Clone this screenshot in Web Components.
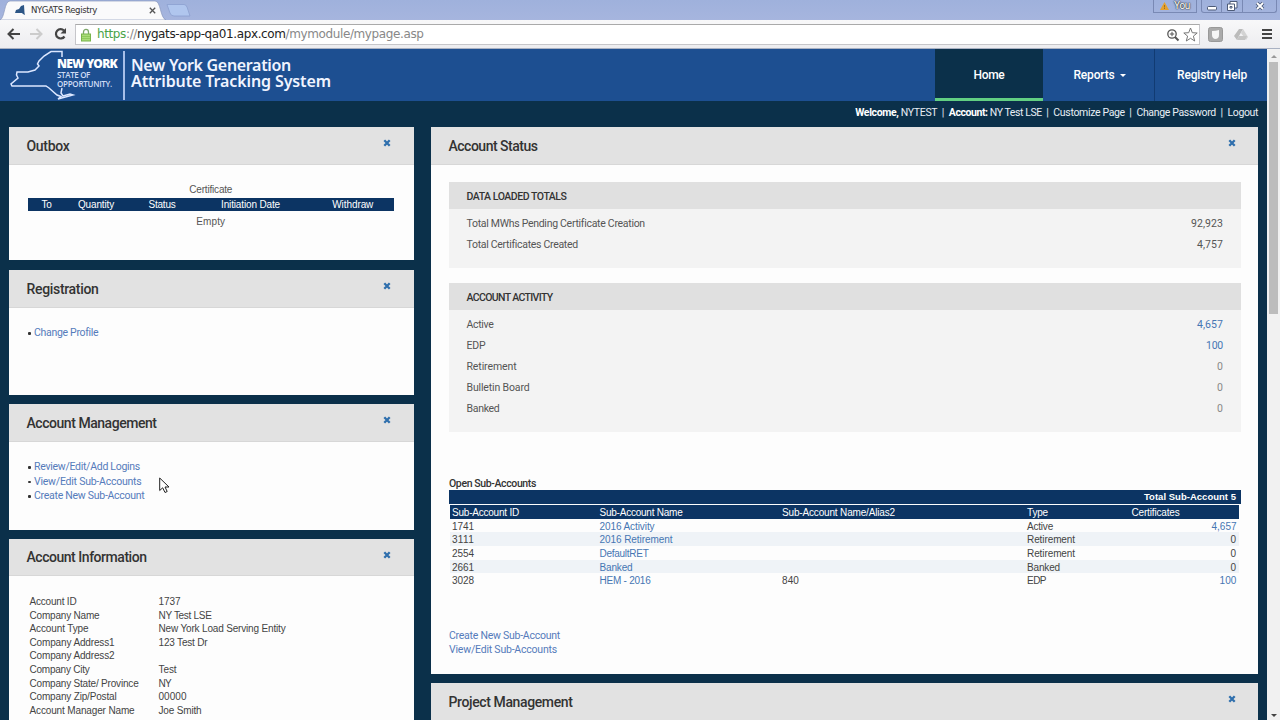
<!DOCTYPE html>
<html lang="en">
<head>
<meta charset="utf-8">
<title>NYGATS Registry</title>
<style>
  body {
    margin: 0;
    height: 720px;
    overflow: hidden;
    display: flex;
    flex-direction: column;
    font: 10.500px/14px Roboto, "Liberation Sans", sans-serif;
    color: #444;
  }
  .viewport { flex: 1; display: flex; min-height: 0; }
  .page { flex: 1; background: #0b304a; overflow: hidden; }
  .columns { display: grid; grid-template-columns: 404.5px 827px; gap: 17.5px; padding-left: 9px; align-items: start; }
  .column { display: flex; flex-direction: column; }
</style>
</head>
<body>
<browser-chrome></browser-chrome>
<div class="viewport">
  <div class="page">
    <registry-header></registry-header>
    <user-bar></user-bar>
    <div class="columns">
      <div class="column">
        <portal-panel heading="Outbox" heading-width="43" style="height:133px;margin-bottom:10px"><outbox-table></outbox-table></portal-panel>
        <portal-panel heading="Registration" heading-width="72" style="height:125px;margin-bottom:9px">
          <link-list items="Change Profile:64"></link-list>
        </portal-panel>
        <portal-panel heading="Account Management" heading-width="130" style="height:125.5px;margin-bottom:9px">
          <link-list items="Review/Edit/Add Logins:106,View/Edit Sub-Accounts:107.5,Create New Sub-Account:110.5"></link-list>
        </portal-panel>
        <portal-panel heading="Account Information" heading-width="120" style="height:220px"><account-info></account-info></portal-panel>
      </div>
      <div class="column">
        <portal-panel heading="Account Status" heading-width="89" style="height:547px;margin-bottom:9px"><account-status></account-status></portal-panel>
        <portal-panel heading="Project Management" heading-width="124" style="height:120px"></portal-panel>
      </div>
    </div>
  </div>
  <page-scrollbar></page-scrollbar>
</div>
<mouse-pointer></mouse-pointer>

<script>
class BaseElement extends HTMLElement {
  constructor() {
    super()
    this.attachShadow({ mode: "open" })
  }

  connectedCallback() {
    this.shadowRoot.innerHTML = this.template()
  }
}

class BrowserChrome extends BaseElement {
  template() {
    return `
      <style>
        :host { display: flex; flex-direction: column; height: 49px; flex: none; }
        .tabs { height: 20px; display: flex; background: linear-gradient(#9fb1dc, #a6b5de); }
        .tab { width: 166px; height: 20px; display: flex; align-items: center; position: relative; font: 9.500px/14px "DejaVu Sans Condensed", "DejaVu Sans", sans-serif; color: #333; }
        .tab > .shape { position: absolute; left: 0; top: 0; }
        .tab > :not(.shape) { z-index: 1; }
        .favicon { margin-left: 15px; }
        fit-text.name { margin-left: 6px; }
        .close { margin-left: auto; margin-right: 10px; }
        .controls { margin-left: auto; display: flex; height: 13px; margin-right: 3px; }
        .controls > div { box-sizing: border-box; border: 1px solid #7989b4; border-top: 0; display: flex; align-items: center; justify-content: center; }
        .you { width: 44px; margin-right: 4px; gap: 5px; color: #fff; text-shadow: 0 0 1px #333, 0 0 1px #333, 0 0 2px #444; font-size: 10px; }
        .controls .min { width: 21px; border-radius: 0 0 0 3px; }
        .controls .max { width: 21px; border-left: 0; }
        .controls .x { width: 34px; border-left: 0; border-radius: 0 0 3px 0; }
        .toolbar { height: 28px; display: flex; align-items: center; background: linear-gradient(#f8f8f9, #ededf0); border-bottom: 1px solid #a9b1c2; }
        .back { margin-left: 7px; }
        .forward { margin-left: 10px; }
        .reload { margin-left: 10px; }
        .omnibox { margin-left: 7px; margin-top: 1px; width: 1125px; height: 21px; box-sizing: border-box; background: #fff; border: 1px solid #c6c6ca; border-top-color: #aaa; display: flex; align-items: center; font: 12px/18px "DejaVu Sans", sans-serif; color: #888; }
        .lock { margin: 0 6px 0 5px; }
        .omnibox fit-text { margin-top: -1px; }
        .secure { color: #4aa348; }
        .host { color: #222; }
        .zoom { margin-left: auto; margin-right: 3px; }
        .star { margin-right: 1px; }
        .shield { margin-left: 8px; }
        .drive { margin-left: 11px; }
        .menu { margin-left: 14px; }
      </style>
      <div class="tabs">
        <div class="tab">
          <svg class="shape" width="166" height="20"><path d="M0 20C5 18 4 1 10 1H155C161 1 160 18 166 20Z" fill="#fafafb" stroke="#8a98bd" stroke-width=".7"/></svg>
          <svg class="favicon" width="10" height="10" viewBox="0 0 10 10"><path d="M0 8L1 5L4 4L6 1L9 0L9.500 8L10 10L8 9L7 8Z" fill="#2d5686"/></svg>
          <fit-text class="name" width="66">NYGATS Registry</fit-text>
          <svg class="close" width="7" height="7" viewBox="0 0 7 7"><path d="M.8 .8L6.200 6.200M6.200 .8L.8 6.200" stroke="#555" stroke-width="1.300"/></svg>
        </div>
        <svg width="25" height="20"><path d="M1 4.500H18Q20 4.500 21 7L24 16H8Q5 16 4 13Z" fill="#b0c6ee" stroke="#8ba0cf" stroke-width=".8"/></svg>
        <div class="controls">
          <div class="you">
            <svg width="9" height="8" viewBox="0 0 9 8"><path d="M4.500 0L9 8H0Z" fill="#e5a12e"/><path d="M4.500 3V5.500M4.500 6V7" stroke="#a2711d"/></svg>
            <fit-text width="16">You</fit-text>
          </div>
          <div class="min"><svg width="10" height="12"><rect x=".5" y="6.500" width="9" height="3.500" rx="1" fill="#fff" stroke="#4d5b78"/></svg></div>
          <div class="max"><svg width="12" height="12"><path d="M4 1.500H11V8H8.500V10.500H1.500V4H4Z" fill="#fff" stroke="#4d5b78"/><path d="M4 4H8.500V8M4 6.500H6V8H4Z" fill="none" stroke="#4d5b78"/></svg></div>
          <div class="x"><svg width="10" height="10"><path d="M2 2L8 8M8 2L2 8" stroke="#4d5b78" stroke-width="3.600"/><path d="M2 2L8 8M8 2L2 8" stroke="#fff" stroke-width="1.800"/></svg></div>
        </div>
      </div>
      <div class="toolbar">
        <svg class="back" width="13" height="12" viewBox="0 0 13 12"><path d="M6.500 1L1.500 6L6.500 11M2 6H13" fill="none" stroke="#444" stroke-width="2"/></svg>
        <svg class="forward" width="13" height="12" viewBox="0 0 13 12"><path d="M6.500 1L11.500 6L6.500 11M11 6H0" fill="none" stroke="#ccc" stroke-width="2"/></svg>
        <svg class="reload" width="15" height="14" viewBox="0 0 15 14"><path d="M11.500 9.500A4.700 4.700 0 1 1 11 3.500" fill="none" stroke="#444" stroke-width="2.200"/><path d="M13 1V6.500H7.500Z" fill="#444"/></svg>
        <div class="omnibox">
          <svg class="lock" width="10" height="14" viewBox="0 0 10 14"><path d="M2.500 7V4A2.500 2.700 0 0 1 7.500 4V7" fill="none" stroke="#7da76b" stroke-width="1.300"/><rect x=".5" y="6" width="9" height="7" fill="#a9dc78" stroke="#78b44c"/><path d="M1 8.500H9M1 10.500H9" stroke="#88c556" stroke-width=".8"/></svg>
          <fit-text width="326.500"><span class="secure">https</span>://<span class="host">nygats-app-qa01.apx.com</span>/mymodule/mypage.asp</fit-text>
          <svg class="zoom" width="14" height="14" viewBox="0 0 14 14"><circle cx="6" cy="6" r="4.200" fill="#fff" stroke="#555" stroke-width="1.300"/><path d="M9 9L12.500 12.500" stroke="#555" stroke-width="2"/><path d="M6 3.800V8.200M3.800 6H8.200" stroke="#555"/></svg>
          <svg class="star" width="15" height="15" viewBox="0 0 15 15"><path d="M7.500 1L9.300 5.700L14.200 6L10.400 9.100L11.700 14L7.500 11.300L3.300 14L4.600 9.100L.8 6L5.700 5.700Z" fill="#fff" stroke="#777"/></svg>
        </div>
        <svg class="shield" width="15" height="15" viewBox="0 0 15 15"><rect x=".5" y=".5" width="14" height="14" rx="2" fill="#aaa" stroke="#999"/><path d="M4 4Q8 4 11 3V8Q11 12 7 12Q4 11 4 8Z" fill="#f5f5f5"/></svg>
        <svg class="drive" width="14" height="13" viewBox="0 0 14 13"><path d="M5 1H9L5 8L3 12L0 8Z" fill="#bbb"/><path d="M9 1L14 9L12 12L7 5Z" fill="#d3d3d3"/><path d="M5 8H13L11 12H3Z" fill="#c5c5c5"/></svg>
        <svg class="menu" width="10" height="12"><path d="M0 2H10M0 6H10M0 10H10" stroke="#444" stroke-width="2"/></svg>
      </div>
    `
  }
}

class RegistryHeader extends BaseElement {
  template() {
    return `
      <style>
        :host { display: flex; height: 52px; background: #1d4f91; color: #f0f4ff; font-family: "Noto Sans", sans-serif; }
        .state { margin-left: 9px; overflow: visible; }
        .brand { width: 61px; margin-left: -13px; margin-top: 9px; font: 600 8px/9px "Open Sans", sans-serif; color: #cfdcf5; }
        .brand b { display: block; font-size: 12px; line-height: 12px; color: #fff; font-weight: 800; }
        .brand fit-text { display: block; }
        .brand > fit-text { height: 8.500px; }
        .rule { width: 2px; margin: 2px 0 1px 5px; background: #a7bee8; }
        .title { margin: 8px 0 0 6px; font: 600 16px/16px "Noto Sans", sans-serif; }
        .title fit-text { display: block; }
        nav { margin-left: auto; display: flex; font: 500 12px/14px Roboto, sans-serif; color: #fff; }
        nav div { box-sizing: border-box; display: flex; align-items: center; justify-content: center; gap: 5px; }
        .home { width: 108px; background: #0b304a; border-bottom: 3px solid #62cf82; padding-top: 3px; }
        .reports { width: 112px; border-right: 1px solid #113b72; padding-left: 2px; }
        .help { width: 112px; padding-left: 2px; }
        .caret { border: 3px solid transparent; border-top-color: #fff; border-bottom: 0; }
      </style>
      <svg class="state" width="61" height="52" viewBox="0 0 61 52"><path d="M53 8V2.500H42L35 7L30 12L28.500 15L30 17L26 21L19 23H8L7.500 26L9 29L2 35L3 37H37L40 39L48 46L52 47.500L49 50L64 46L61 45L54 47L52 44L53 39" fill="none" stroke="#dce7ff" stroke-width="1.500"/></svg>
      <div class="brand">
        <b><fit-text width="60">NEW YORK</fit-text></b>
        <fit-text width="33">STATE OF</fit-text>
        <fit-text width="55">OPPORTUNITY.</fit-text>
      </div>
      <div class="rule"></div>
      <div class="title">
        <fit-text width="160">New York Generation</fit-text>
        <fit-text width="200">Attribute Tracking System</fit-text>
      </div>
      <nav>
        <div class="home"><fit-text width="31">Home</fit-text></div>
        <div class="reports"><fit-text width="41">Reports</fit-text><span class="caret"></span></div>
        <div class="help"><fit-text width="70">Registry Help</fit-text></div>
      </nav>
    `
  }
}

class UserBar extends BaseElement {
  template() {
    return `
      <style>
        :host { display: flex; justify-content: flex-end; align-items: center; gap: 4.500px; height: 23px; padding: 0 9px 3px 0; color: #e8eef5; font-size: 10.500px; }
        b { font-weight: 700; color: #fff; }
      </style>
      <fit-text width="82"><b>Welcome,</b> NYTEST</fit-text><span>|</span>
      <fit-text width="93"><b>Account:</b> NY Test LSE</fit-text><span>|</span>
      <fit-text width="71.500">Customize Page</fit-text><span>|</span>
      <fit-text width="79.500">Change Password</fit-text><span>|</span>
      <fit-text width="30.500">Logout</fit-text>
    `
  }
}

class PortalPanel extends BaseElement {
  template() {
    return `
      <style>
        :host { display: block; box-sizing: border-box; background: #fdfdfd; overflow: hidden; }
        header { box-sizing: border-box; height: 37.500px; display: flex; justify-content: space-between; align-items: center; padding: 1px 22.500px 0 17.500px; background: #e2e2e2; border-bottom: 1px solid #d7d7d7; }
        h2 { margin: 0; font-size: 14px; line-height: 18px; font-weight: 500; color: #333; }
        svg { margin-top: -5px; }
      </style>
      <header>
        <h2><fit-text width="${this.getAttribute("heading-width")}">${this.getAttribute("heading")}</fit-text></h2>
        <svg width="8" height="8" viewBox="0 0 8 8"><path d="M1.300 1.300L6.700 6.700M6.700 1.300L1.300 6.700" stroke="#2f6fad" stroke-width="2.300"/></svg>
      </header>
      <slot></slot>
    `
  }
}

class OutboxTable extends BaseElement {
  template() {
    return `
      <style>
        :host { display: block; margin: 18px 20px 0 19px; font: 10px/13px "Liberation Sans", sans-serif; text-align: center; color: #555; }
        .head { display: grid; grid-template-columns: 37px 62px 70px 107px 1fr; height: 13px; background: #0c3463; color: #fff; margin: 2px 0 4px; }
      </style>
      <fit-text width="43">Certificate</fit-text>
      <div class="head">
        <span><fit-text width="10">To</fit-text></span><span><fit-text width="36">Quantity</fit-text></span><span><fit-text width="27">Status</fit-text></span><span><fit-text width="59">Initiation Date</fit-text></span><span style="padding-left:8px"><fit-text width="41">Withdraw</fit-text></span>
      </div>
      <fit-text width="29">Empty</fit-text>
    `
  }
}

class LinkList extends BaseElement {
  template() {
    const items = this.getAttribute("items").split(",").map(item => item.split(":"))
    return `
      <style>
        :host { display: block; padding: 18.500px 0 0 19px; }
        ul { margin: 0; padding: 0; list-style: none; }
        li { display: flex; align-items: center; gap: 3.500px; height: 14.500px; color: #557bbb; }
        li::before { content: ""; width: 2.500px; height: 2.500px; border-radius: 1px; background: #333; }
      </style>
      <ul>${items.map(([label, width]) => `<li><fit-text width="${width}">${label}</fit-text></li>`).join("")}</ul>
    `
  }
}

class AccountInfo extends BaseElement {
  template() {
    const rows = [
      ["Account ID", 47, "1737", 22],
      ["Company Name", 70, "NY Test LSE", 53],
      ["Account Type", 59, "New York Load Serving Entity", 127],
      ["Company Address1", 85, "123 Test Dr", 49],
      ["Company Address2", 85, "", 0],
      ["Company City", 60, "Test", 18],
      ["Company State/ Province", 109, "NY", 12.5],
      ["Company Zip/Postal", 87, "00000", 28],
      ["Account Manager Name", 105, "Joe Smith", 43]
    ]
    return `
      <style>
        :host { display: grid; grid-template-columns: 129px 1fr; grid-auto-rows: 13.630px; padding: 18.900px 0 0 20.500px; font: 10px/13.600px "Liberation Sans", sans-serif; color: #444; }
      </style>
      ${rows.map(([label, lw, value, vw]) => `
        <span><fit-text width="${lw}">${label}</fit-text></span>
        <span>${value && `<fit-text width="${vw}">${value}</fit-text>`}</span>`).join("")}
    `
  }
}

class TotalsBox extends BaseElement {
  template() {
    const rows = this.getAttribute("rows").split(";").map(row => row.split(":"))
    return `
      <style>
        :host { display: block; box-sizing: border-box; background: #f3f3f3; }
        h3 { margin: 0 0 5px; height: 27px; padding: 2px 17.500px 0; display: flex; align-items: center; box-sizing: border-box; background: #e0e0e0; color: #333; font-weight: 500; font-size: 10.500px; }
        div { height: 20.800px; padding: 0 17.500px; display: flex; align-items: center; justify-content: space-between; color: #555; }
        .link { color: #4676b3; }
        .zero { color: #888; }
      </style>
      <h3><fit-text width="${this.getAttribute("heading-width")}">${this.getAttribute("heading")}</fit-text></h3>
      ${rows.map(([label, lw, value, vw, kind]) => `<div><fit-text width="${lw}">${label}</fit-text><fit-text class="${kind || ""}" width="${vw}">${value}</fit-text></div>`).join("")}
    `
  }
}

class AccountStatus extends BaseElement {
  template() {
    const rows = [
      ["1741", "2016 Activity", 55, "", "Active", 26, "4,657", 25],
      ["3111", "2016 Retirement", 73, "", "Retirement", 48, "0", 6],
      ["2554", "DefaultRET", 49, "", "Retirement", 48, "0", 6],
      ["2661", "Banked", 33, "", "Banked", 33, "0", 6],
      ["3028", "HEM - 2016", 51, "840", "EDP", 19, "100", 17]
    ]
    return `
      <style>
        :host { display: block; padding: 17.500px 17.500px 0 18px; }
        totals-box { margin-bottom: 15px; }
        h4 { margin: 45px 0 0; font-size: 10.500px; line-height: 13px; font-weight: 500; color: #333; }
        .total { height: 13.500px; background: #0c3463; color: #fff; display: flex; align-items: flex-end; justify-content: flex-end; padding-right: 4.500px; font: bold 9.500px/12.500px "Liberation Sans", sans-serif; }
        .table { margin: 1.500px 2px 0 1px; font: 10px/15px "Liberation Sans", sans-serif; color: #444; }
        .row { display: grid; grid-template-columns: 147.500px 182.500px 245px 1fr 107px; height: 13.630px; padding: 0 2px; }
        .row:nth-child(odd) { background: #eff3f7; }
        .row:nth-child(2n) { background: #fdfdfd; }
        .table .head { background: #0c3463; color: #fff; }
        .head > :last-child { padding-left: 2px; }
        .right { text-align: right; }
        .link { color: #4676b3; }
        .actions { margin-top: 42px; line-height: 14.500px; color: #557bbb; }
        .actions fit-text { display: block; }
      </style>
      <totals-box style="height:86px" heading="DATA LOADED TOTALS" heading-width="100" rows="Total MWhs Pending Certificate Creation:178:92,923:32;Total Certificates Created:111:4,757:26"></totals-box>
      <totals-box style="height:149px" heading="ACCOUNT ACTIVITY" heading-width="86" rows="Active:27:4,657:26:link;EDP:19:100:17:link;Retirement:50:0:6:zero;Bulletin Board:63:0:6:zero;Banked:33:0:6:zero"></totals-box>
      <h4><fit-text width="87">Open Sub-Accounts</fit-text></h4>
      <div class="total"><fit-text width="92">Total Sub-Account 5</fit-text></div>
      <div class="table">
        <div class="row head">
          <span><fit-text width="67">Sub-Account ID</fit-text></span><span><fit-text width="83">Sub-Account Name</fit-text></span><span><fit-text width="113">Sub-Account Name/Alias2</fit-text></span><span><fit-text width="21">Type</fit-text></span><span><fit-text width="48">Certificates</fit-text></span>
        </div>
        ${rows.map(([id, name, nw, alias, type, tw, count, cw]) => `
          <div class="row">
            <span><fit-text width="22">${id}</fit-text></span>
            <span class="link"><fit-text width="${nw}">${name}</fit-text></span>
            <span>${alias && `<fit-text width="17">${alias}</fit-text>`}</span>
            <span><fit-text width="${tw}">${type}</fit-text></span>
            <span class="right ${count === "0" ? "" : "link"}"><fit-text width="${cw}">${count}</fit-text></span>
          </div>`).join("")}
      </div>
      <div class="actions">
        <fit-text width="111">Create New Sub-Account</fit-text>
        <fit-text width="108">View/Edit Sub-Accounts</fit-text>
      </div>
    `
  }
}

class PageScrollbar extends BaseElement {
  template() {
    return `
      <style>
        :host { width: 13px; flex: none; box-sizing: border-box; padding: 6px 2px 3px; display: flex; flex-direction: column; align-items: center; background: #f1f1f1; }
        .up, .down { border: 3px solid transparent; }
        .up { border-bottom-color: #999; border-top: 0; }
        .thumb { width: 9px; height: 252px; margin-top: 4px; background: #bcbcbc; }
        .down { border-top-color: #444; border-bottom: 0; margin-top: auto; }
      </style>
      <span class="up"></span><div class="thumb"></div><span class="down"></span>
    `
  }
}

class MousePointer extends BaseElement {
  template() {
    return `
      <style>:host { position: absolute; left: 159px; top: 477px; } svg { display: block; }</style>
      <svg width="11" height="17" viewBox="0 0 11 17"><path d="M.7 1V13.500L3.700 10.800L6 15.500L8.200 14.500L6 10H10Z" fill="#fff" stroke="#222"/></svg>
    `
  }
}

// Spreads its text over the given width with letter spacing
class FitText extends BaseElement {
  template() {
    return `<style>:host { display: inline-block; white-space: nowrap; } span { display: inline-block; }</style><span><slot></slot></span>`
  }

  connectedCallback() {
    super.connectedCallback()
    const span = this.shadowRoot.querySelector("span")
    const width = Number(this.getAttribute("width"))
    const spacing = (width - span.getBoundingClientRect().width) / this.textContent.length
    this.style.letterSpacing = `${spacing}px`
  }
}

customElements.define("browser-chrome", BrowserChrome)
customElements.define("registry-header", RegistryHeader)
customElements.define("user-bar", UserBar)
customElements.define("portal-panel", PortalPanel)
customElements.define("outbox-table", OutboxTable)
customElements.define("link-list", LinkList)
customElements.define("account-info", AccountInfo)
customElements.define("account-status", AccountStatus)
customElements.define("totals-box", TotalsBox)
customElements.define("page-scrollbar", PageScrollbar)
customElements.define("mouse-pointer", MousePointer)
customElements.define("fit-text", FitText)
</script>
</body>
</html>
